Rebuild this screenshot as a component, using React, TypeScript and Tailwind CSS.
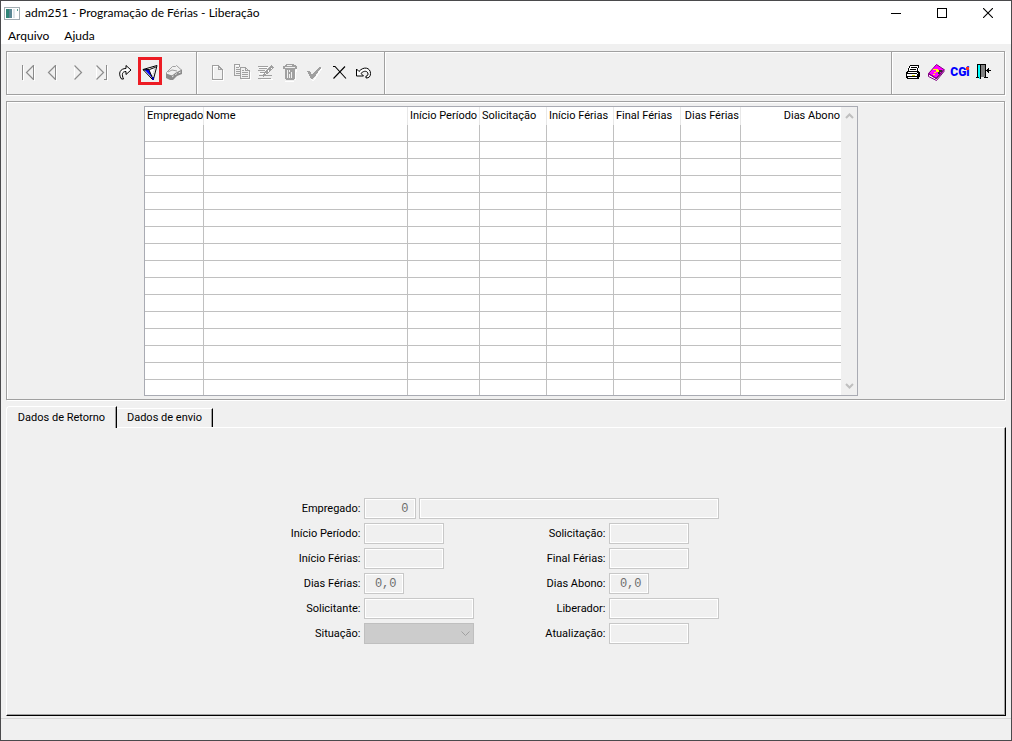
import React from 'react';
import type { ReactNode } from 'react';

const ETCHED = 'border border-[#a0a0a0] shadow-[inset_1px_1px_0_#fff,1px_1px_0_#fff]';

function ToolButton({ label, highlight, children }: { label: string; highlight?: boolean; children: ReactNode }) {
  return (
    <button
      type="button"
      aria-label={label}
      className={highlight ? 'block h-7 w-6 outline-3 -outline-offset-3 outline-[#ed1c24]' : 'block h-7 w-6'}
    >
      {children}
    </button>
  );
}

function Glyph({ children }: { children: ReactNode }) {
  return (
    <svg viewBox="0 0 24 28" className="block h-7 w-6" fill="none" shapeRendering="crispEdges" aria-hidden="true">
      {children}
    </svg>
  );
}

const GRAY = '#a0a0a0';
const DARK = '#8c8c8c';

function FirstIcon() {
  return (
    <Glyph>
      <path d="M5.500 9v15M16.500 9v15" stroke="#fff" />
      <path d="M4.500 8v15M15.500 8v15" stroke={DARK} />
      <path d="M15.500 8.500l-7 7 7 7" stroke={DARK} strokeWidth="1.200" shapeRendering="auto" />
    </Glyph>
  );
}

function PreviousIcon() {
  return (
    <Glyph>
      <path d="M14.500 9v15" stroke="#fff" />
      <path d="M13.500 8v15" stroke={DARK} />
      <path d="M13.500 8.500l-7 7 7 7" stroke={DARK} strokeWidth="1.200" shapeRendering="auto" />
    </Glyph>
  );
}

function NextIcon() {
  return (
    <Glyph>
      <path d="M8.500 8v15" stroke="#fff" />
      <path d="M8.500 8.500l7 7-7 7" stroke={DARK} strokeWidth="1.200" shapeRendering="auto" />
    </Glyph>
  );
}

function LastIcon() {
  return (
    <Glyph>
      <path d="M6.500 8v15M17.500 9v15" stroke="#fff" />
      <path d="M16.500 8v15M14 22.500h3" stroke={DARK} />
      <path d="M6.500 8.500l7 7-7 7" stroke={DARK} strokeWidth="1.200" shapeRendering="auto" />
    </Glyph>
  );
}

function GoIcon() {
  return (
    <Glyph>
      <path
        d="M12 8.500l5 4.500-5 4.500v-3c-4 0-4.500 3-2.500 7.500h-2c-4-6-1-10.500 4.500-10.500z"
        fill="#fff"
        stroke="#000"
        shapeRendering="auto"
      />
    </Glyph>
  );
}

function FilterIcon() {
  return (
    <Glyph>
      <g shapeRendering="auto">
        <path d="M5 12.500l14-4-3.500 13.500h-2z" fill="#fff" />
        <path d="M6.500 12.500h4l3.500 8z" fill="#0000ff" stroke="#00f" strokeWidth="0.600" />
        <path d="M5 12.500l14-4-3.500 13.500h-1.500zM5 13l6.500-.5L18 10M11 13l3.500 8" stroke="#000" />
        <path d="M17 10.500l-2.500 9" stroke="#a0a0a0" strokeDasharray="1 1" />
      </g>
      <path d="M14 20h2v3h-2z" fill="#0000a0" />
    </Glyph>
  );
}

function EraserIcon() {
  return (
    <Glyph>
      <g shapeRendering="auto">
        <path d="M4.500 15.500l6-6h3l1-1 5.500 5-5.500 3-4 3-6-2z" fill="#f0f0f0" stroke={GRAY} />
        <path d="M4 16.500l6 2 4-3 6-3v4.500l-5 2-4 4h-3l-4-2z" fill={DARK} />
        <path d="M6 15l4-2 5 1" stroke={GRAY} />
        <path d="M10 20l5-3.500 5-2" stroke="#fff" strokeWidth="0.800" strokeDasharray="2 2" />
      </g>
    </Glyph>
  );
}

function NewIcon() {
  return (
    <Glyph>
      <path d="M8.500 9v12M8 9.500h6M18.500 13v11M7 23.500h12" stroke="#fff" />
      <path d="M7.500 8v15M7 8.500h7M13.500 8v5M13 12.500h5M17.500 12v11M7 22.500h11M14.500 9v2M15.500 10v2M16.500 11v2" stroke={GRAY} />
    </Glyph>
  );
}

function CopyIcon() {
  return (
    <Glyph>
      <path d="M7 8.500h4M21.500 15v8M13 22.500h9" stroke="#fff" />
      <path
        d="M5.500 7v11M5 7.500h6M10.500 7v3M5 18.500h7M7 10.500h3M7 12.500h4M7 14.500h4M7 16.500h4M11.500 10v12M11 10.500h6M16.500 10v4M16 13.500h5M20.500 13v9M11 21.500h10M17.500 11v1M18.500 12v1M13 13.500h2M13 15.500h6M13 17.500h6M13 19.500h6"
        stroke={GRAY}
      />
    </Glyph>
  );
}

function EditIcon() {
  return (
    <Glyph>
      <path d="M6 10.500h9M6 13.500h7M6 16.500h5M8 22.500h12" stroke="#fff" />
      <path d="M5 9.500h10M6 11.500h8M5 13.500h7M7 15.500h4M6 18.500h13M5 21.500h13" stroke={GRAY} />
      <path d="M18 8l3 2-7 7-4 3 1-5z" fill={GRAY} />
      <path d="M12 17l8-7" stroke="#fff" strokeDasharray="1 3" />
    </Glyph>
  );
}

function TrashIcon() {
  return (
    <Glyph>
      <path d="M8 24h9M19.500 12v3M18.500 13v10" stroke="#fff" />
      <path d="M9 7h8v1h2v1h1v3h-2v10h-1v1H9v-1H8V12H6V9h2V8h1z" fill={GRAY} />
      <path d="M10 8.500h5M8 10.500h10M10.500 13v8M12.500 13v2M14.500 15v6M12.500 17v4" stroke="#f0f0f0" />
    </Glyph>
  );
}

function ConfirmIcon() {
  return (
    <Glyph>
      <path d="M8 17l3 6h2l8-12" stroke="#fff" />
      <path d="M6 14h3l2 4 7-8h2v1l-8 11h-2z" fill={GRAY} />
    </Glyph>
  );
}

function CancelIcon() {
  return (
    <Glyph>
      <g shapeRendering="auto">
        <path d="M8 9.500h2l11 12M20 9.500L8.500 21.500" stroke="#000" strokeWidth="1.100" />
      </g>
    </Glyph>
  );
}

function UndoIcon() {
  return (
    <Glyph>
      <path
        d="M7.500 12v7h7l-2.500-2.500c3-3.500 7-2.500 7 .5 0 1.500-1 2-2 2v2c3 0 4.500-1.500 4.500-4.500 0-6-7-7.500-11.500-2z"
        fill="#fff"
        stroke="#000"
        shapeRendering="auto"
      />
    </Glyph>
  );
}

function PrinterIcon() {
  return (
    <Glyph>
      <path d="M9 9h10v4h-2v3H7v-3z" fill="#fff" />
      <path d="M10 8.500h9M9.500 9v2M8.500 11v3M18.500 9v2M17.500 11v3M11 10.500h6M10 12.500h6" stroke="#000" />
      <path d="M7 14h12v1h1v5h-1v2H7v-1H6v-6h1z" fill="#000" />
      <path d="M8 15h9v1H8zM7 17h10v2H7zM8 20h9v1H8zM17 16h1v1h-1z" fill="#fff" />
      <path d="M12 18h3v1h-3z" fill="#d8d800" />
    </Glyph>
  );
}

function BookIcon() {
  return (
    <Glyph>
      <g shapeRendering="auto">
        <path d="M4.500 16.500l8-9 7.500 5-8 9.500z" fill="#ff00ff" stroke="#800080" />
        <path d="M4.500 16.500v3l8 4 7.500-9v-2l-8 9z" fill="#fff" stroke="#800080" />
        <path d="M5 17l7.500 4.500 7-8" stroke="#800080" strokeWidth="1.200" />
      </g>
      <path d="M9 12h5v1h1v2h-3v1h-2v-1h2v-2H9zM9 17h2v1H9z" fill="#ffff00" />
      <path d="M15 13h3v2h-2v2h-2v-2h1z" fill="#303030" />
    </Glyph>
  );
}

function ExitIcon() {
  return (
    <Glyph>
      <path d="M5 7h9v13H5z" fill="#000" />
      <path d="M9 8h4v12H9z" fill="#808080" />
      <path d="M6 8h2v1h1v12H8v1H7v-2H6z" fill="#00ffff" />
      <path d="M4 20.500h3M12 20.500h4M8.500 8v14M14 13.500h5M16.500 11v5M15.500 12v3M13.500 8v12" stroke="#000" />
    </Glyph>
  );
}

function AppIcon() {
  return (
    <svg viewBox="0 0 16 13" className="h-[13px] w-4" shapeRendering="crispEdges" aria-hidden="true">
      <path d="M0 0h16v13H0z" fill="#a3adb2" />
      <path d="M1 1h14v11H1z" fill="#fff" />
      <path d="M2 2h6v9H2z" fill="#2f8577" />
      <path d="M5 2h3v9H5z" fill="#5b8793" />
      <path d="M9 2h2v9H9z" fill="#dfe6e9" />
      <path d="M13 2h1v2h-1z" fill="#58a090" />
    </svg>
  );
}

type Column = { title: string; col: string; head: string };

const columns: Column[] = [
  { title: 'Empregado', col: 'w-[59px]', head: 'text-left' },
  { title: 'Nome', col: 'w-[204px]', head: 'text-left' },
  { title: 'Início Período', col: 'w-[72px]', head: 'text-left' },
  { title: 'Solicitação', col: 'w-[67px]', head: 'text-left' },
  { title: 'Início Férias', col: 'w-[67px]', head: 'text-left' },
  { title: 'Final Férias', col: 'w-[67px]', head: 'text-left' },
  { title: 'Dias Férias', col: 'w-[60px]', head: 'text-right' },
  { title: 'Dias Abono', col: 'w-[100px]', head: 'text-right' },
];

const ROW_COUNT = 16;

function EmployeeGrid() {
  return (
    <div className="flex border border-[#a9abb3] bg-white">
      <table className="w-[696px] table-fixed border-separate border-spacing-0">
        <colgroup>
          {columns.map((c) => (
            <col key={c.title} className={c.col} />
          ))}
        </colgroup>
        <thead>
          <tr className="h-[18px]">
            {columns.map((c, i) => (
              <th
                key={c.title}
                scope="col"
                className={`${c.head} ${i < columns.length - 1 ? 'border-r border-[#e8e8e8]' : ''} whitespace-nowrap py-0 pr-px pl-0.5 font-normal leading-4`}
              >
                {c.title}
              </th>
            ))}
          </tr>
        </thead>
        <tbody>
          {Array.from({ length: ROW_COUNT }, (_, r) => (
            <tr key={r} className={r < ROW_COUNT - 1 ? 'h-[17px]' : 'h-[15px]'}>
              {columns.map((c, i) => (
                <td
                  key={c.title}
                  className={`${i < columns.length - 1 ? 'border-r' : ''} ${r < ROW_COUNT - 1 ? 'border-b' : ''} border-[#c0c0c0] p-0`}
                />
              ))}
            </tr>
          ))}
        </tbody>
      </table>
      <div className="flex w-4 flex-col justify-between bg-[#f0f0f0]">
        <button type="button" aria-label="Rolar para cima" className="flex h-[18px] items-center justify-center">
          <svg viewBox="0 0 9 6" className="h-1.5 w-[9px]" fill="none" stroke="#bfbfbf" strokeWidth="2" aria-hidden="true">
            <path d="M1 5l3.500-3.500L8 5" />
          </svg>
        </button>
        <button type="button" aria-label="Rolar para baixo" className="flex h-[18px] items-center justify-center">
          <svg viewBox="0 0 9 6" className="h-1.5 w-[9px]" fill="none" stroke="#bfbfbf" strokeWidth="2" aria-hidden="true">
            <path d="M1 1l3.500 3.500L8 1" />
          </svg>
        </button>
      </div>
    </div>
  );
}

const FIELD =
  'h-[21px] border border-[#c8c8c8] bg-[#f0f0f0] px-1.5 text-right font-["Liberation_Mono",monospace] text-xs text-[#6d6d6d] shadow-[inset_0_0_0_1px_#fff]';

function Field({ id, label, width, value = '' }: { id: string; label: string; width: string; value?: string }) {
  return (
    <>
      <label htmlFor={id} className="self-center text-right whitespace-nowrap">
        {label}
      </label>
      <input id={id} disabled defaultValue={value} className={`${FIELD} ${width}`} />
    </>
  );
}

function ReturnForm() {
  return (
    <form className="grid grid-cols-[71px_110px_129px_110px] content-start gap-x-[3px] gap-y-1">
      <label htmlFor="empregado" className="self-center text-right whitespace-nowrap">
        Empregado:
      </label>
      <div className="col-span-3 flex gap-[3px]">
        <input id="empregado" disabled defaultValue="0" className={`${FIELD} w-[52px]`} />
        <input aria-label="Nome do empregado" disabled className={`${FIELD} min-w-0 flex-1`} />
      </div>
      <Field id="inicio-periodo" label="Início Período:" width="w-20" />
      <Field id="solicitacao" label="Solicitação:" width="w-20" />
      <Field id="inicio-ferias" label="Início Férias:" width="w-20" />
      <Field id="final-ferias" label="Final Férias:" width="w-20" />
      <Field id="dias-ferias" label="Dias Férias:" width="w-10" value="0,0" />
      <Field id="dias-abono" label="Dias Abono:" width="w-10" value="0,0" />
      <Field id="solicitante" label="Solicitante:" width="w-[110px]" />
      <Field id="liberador" label="Liberador:" width="w-[110px]" />
      <label htmlFor="situacao" className="self-center text-right whitespace-nowrap">
        Situação:
      </label>
      <div className="relative">
        <select
          id="situacao"
          disabled
          className="block h-[21px] w-full appearance-none border border-[#bfbfbf] bg-[#cccccc] opacity-100"
        />
        <svg
          viewBox="0 0 9 5"
          className="pointer-events-none absolute top-2 right-1 h-[5px] w-[9px]"
          fill="none"
          stroke="#a0a0a0"
          aria-hidden="true"
        >
          <path d="M.5.500l4 4 4-4" />
        </svg>
      </div>
      <Field id="atualizacao" label="Atualização:" width="w-20" />
    </form>
  );
}

export default function App() {
  return (
    <div className="flex min-h-screen flex-col border border-[#4a4a4c] bg-[#f0f0f0] font-[Roboto,sans-serif] text-[11px] leading-4 text-black">
      <header className="bg-white font-[Lato,sans-serif] text-xs">
        <div className="flex h-[25px] items-start justify-between pl-[3px]">
          <div className="flex h-6 items-center gap-[5px]">
            <AppIcon />
            <h1>adm251 - Programação de Férias - Liberação</h1>
          </div>
          <div className="flex">
            <button type="button" aria-label="Minimizar" className="flex h-6 w-[46px] items-center justify-center">
              <svg viewBox="0 0 10 10" className="size-2.5" shapeRendering="crispEdges" aria-hidden="true">
                <path d="M0 5.500h10" stroke="#000" />
              </svg>
            </button>
            <button type="button" aria-label="Maximizar" className="flex h-6 w-[46px] items-center justify-center">
              <svg viewBox="0 0 10 10" className="size-2.5" fill="none" shapeRendering="crispEdges" aria-hidden="true">
                <path d="M.5.500h9v9h-9z" stroke="#000" />
              </svg>
            </button>
            <button type="button" aria-label="Fechar" className="flex h-6 w-[46px] items-center justify-center">
              <svg viewBox="0 0 10 10" className="size-2.5" aria-hidden="true">
                <path d="M0 0l10 10M10 0L0 10" stroke="#000" strokeWidth="1.100" />
              </svg>
            </button>
          </div>
        </div>
        <nav className="flex h-[18px] items-center gap-[15px] pt-0.5 pl-[7px]">
          <button type="button">Arquivo</button>
          <button type="button">Ajuda</button>
        </nav>
      </header>

      <main className="flex flex-1 flex-col pt-[7px] pr-1.5 pl-[5px]">
        <div role="toolbar" aria-label="Ferramentas" className={`flex h-11 ${ETCHED}`}>
          <div className="flex border-r border-[#a0a0a0] pt-[5px] pr-[10px] pl-[11px]">
            <ToolButton label="Primeiro"><FirstIcon /></ToolButton>
            <ToolButton label="Anterior"><PreviousIcon /></ToolButton>
            <ToolButton label="Próximo"><NextIcon /></ToolButton>
            <ToolButton label="Último"><LastIcon /></ToolButton>
            <ToolButton label="Ir para"><GoIcon /></ToolButton>
            <ToolButton label="Filtrar" highlight><FilterIcon /></ToolButton>
            <ToolButton label="Limpar filtro"><EraserIcon /></ToolButton>
          </div>
          <div className="flex border-r border-l border-r-[#a0a0a0] border-l-white pt-[5px] pr-[11px] pl-[7px]">
            <ToolButton label="Novo"><NewIcon /></ToolButton>
            <ToolButton label="Copiar"><CopyIcon /></ToolButton>
            <ToolButton label="Editar"><EditIcon /></ToolButton>
            <ToolButton label="Excluir"><TrashIcon /></ToolButton>
            <ToolButton label="Confirmar"><ConfirmIcon /></ToolButton>
            <ToolButton label="Cancelar"><CancelIcon /></ToolButton>
            <ToolButton label="Desfazer"><UndoIcon /></ToolButton>
          </div>
          <div className="flex-1 border-r border-l border-r-[#a0a0a0] border-l-white" />
          <div className="flex border-l border-white pt-[5px] pr-2 pl-[7px]">
            <ToolButton label="Imprimir"><PrinterIcon /></ToolButton>
            <ToolButton label="Manual"><BookIcon /></ToolButton>
            <button
              type="button"
              className="relative flex h-7 w-6 items-center justify-center pt-0.5 text-xs font-black text-[#0000ff]"
            >
              CGi
              <span className="absolute top-2.5 right-[3px] size-[3px] bg-[#ff3020]" />
            </button>
            <ToolButton label="Sair"><ExitIcon /></ToolButton>
          </div>
        </div>

        <section aria-label="Férias programadas" className={`mt-1.5 flex justify-center pt-1 pr-[9px] pb-[3px] ${ETCHED}`}>
          <EmployeeGrid />
        </section>

        <div className="-mr-px mt-1.5 flex flex-1 flex-col">
          <div role="tablist" className="relative z-10 -mb-px flex items-end">
            <button
              type="button"
              role="tab"
              aria-selected="true"
              className="h-[22px] w-[111px] rounded-tl-sm border-t border-r border-l border-t-white border-r-black border-l-white bg-[#f0f0f0] shadow-[inset_-1px_0_0_#a0a0a0]"
            >
              Dados de Retorno
            </button>
            <button
              type="button"
              role="tab"
              aria-selected="false"
              className="mb-px h-[19px] w-24 border-t border-r border-t-white border-r-black shadow-[inset_-1px_0_0_#a0a0a0]"
            >
              Dados de envio
            </button>
          </div>
          <div
            role="tabpanel"
            className="flex flex-1 justify-center border border-t-white border-r-black border-b-black border-l-white pt-[70px] pb-[70px] pr-1 shadow-[inset_-1px_-1px_0_#a0a0a0]"
          >
            <ReturnForm />
          </div>
        </div>
      </main>

      <footer className="mt-0.5 h-[22px] border-t border-[#d7d7d7]" />
    </div>
  );
}
